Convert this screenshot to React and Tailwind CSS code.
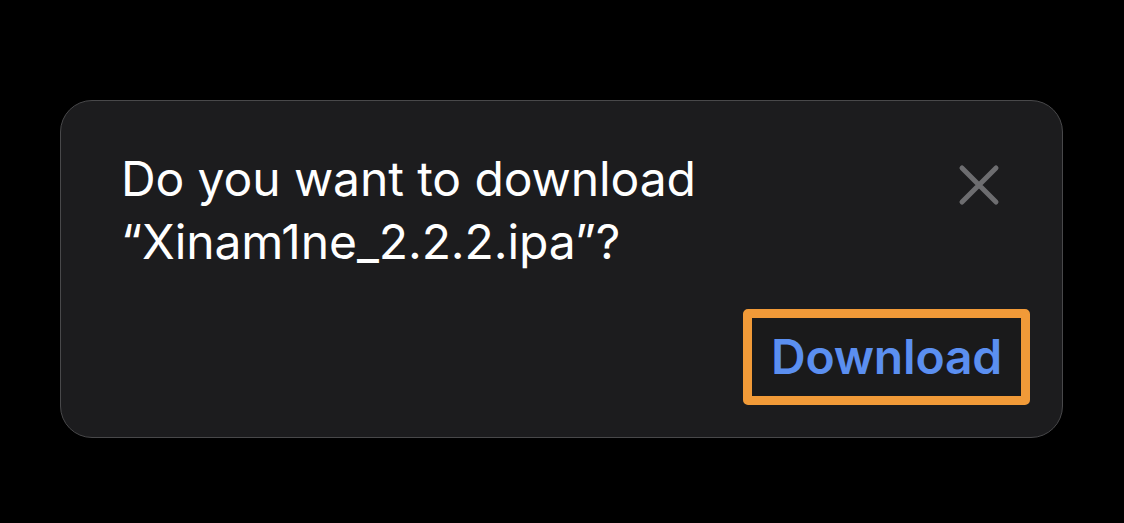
export default function App() {
  return (
    <div className="w-[1124px] h-[523px] bg-black pt-[100px] pl-[60px]" style={{ fontFamily: "Inter, 'Liberation Sans', sans-serif" }}>
      <div className="w-[1003px] h-[338px] rounded-[32px] border border-[#48484a] bg-[#1c1c1e] flex flex-col">
        <div className="flex justify-between pl-[60px] pr-[62px] pt-[46px]">
          <p className="text-white text-[48px] leading-[63px] tracking-[-0.1px]">
            Do you want to download
            <br />
            “Xinam1ne_2.2.2.ipa”?
          </p>
          <svg width="42" height="42" viewBox="0 0 42 42" className="mt-[17px]">
            <path d="M4 4 L38 38 M38 4 L4 38" stroke="#6d6d70" strokeWidth="5" strokeLinecap="round" />
          </svg>
        </div>
        <div className="flex justify-end pr-[32px] mt-[36px]">
          <div className="w-[287px] h-[96px] border-[9px] border-[#f19a38] rounded-[5px] bg-[#1a1a1b] flex items-center justify-center">
            <span className="text-[#5b8ff0] text-[48px] font-semibold leading-none tracking-[-0.2px]">Download</span>
          </div>
        </div>
      </div>
    </div>
  );
}
